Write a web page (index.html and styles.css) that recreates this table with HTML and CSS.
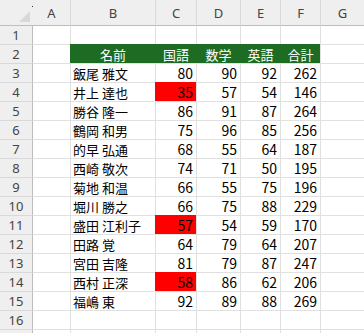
FILE: index.html
```html
<!DOCTYPE html>
<html lang="ja">
<head>
<meta charset="utf-8">
<link rel="stylesheet" href="styles.css">
</head>
<body>
<div class="sheet">
  <div class="corner"><span class="tri"></span></div>
  <div class="ch ch-a">A</div><div class="ch">B</div><div class="ch">C</div><div class="ch">D</div><div class="ch">E</div><div class="ch">F</div><div class="ch">G</div>

  <div class="rh r1">1</div><div class="cell a r1"></div><div class="cell r1"></div><div class="cell r1"></div><div class="cell r1"></div><div class="cell r1"></div><div class="cell r1"></div><div class="cell r1"></div>

  <div class="rh">2</div><div class="cell a"></div><div class="cell hd">名前</div><div class="cell hd">国語</div><div class="cell hd">数学</div><div class="cell hd">英語</div><div class="cell hd">合計</div><div class="cell"></div>

  <div class="rh">3</div><div class="cell a"></div><div class="cell name">飯尾 雅文</div><div class="cell num">80</div><div class="cell num">90</div><div class="cell num">92</div><div class="cell num">262</div><div class="cell"></div>
  <div class="rh">4</div><div class="cell a"></div><div class="cell name">井上 達也</div><div class="cell num bad">35</div><div class="cell num">57</div><div class="cell num">54</div><div class="cell num">146</div><div class="cell"></div>
  <div class="rh">5</div><div class="cell a"></div><div class="cell name">勝谷 隆一</div><div class="cell num">86</div><div class="cell num">91</div><div class="cell num">87</div><div class="cell num">264</div><div class="cell"></div>
  <div class="rh">6</div><div class="cell a"></div><div class="cell name">鶴岡 和男</div><div class="cell num">75</div><div class="cell num">96</div><div class="cell num">85</div><div class="cell num">256</div><div class="cell"></div>
  <div class="rh">7</div><div class="cell a"></div><div class="cell name">的早 弘通</div><div class="cell num">68</div><div class="cell num">55</div><div class="cell num">64</div><div class="cell num">187</div><div class="cell"></div>
  <div class="rh">8</div><div class="cell a"></div><div class="cell name">西崎 敬次</div><div class="cell num">74</div><div class="cell num">71</div><div class="cell num">50</div><div class="cell num">195</div><div class="cell"></div>
  <div class="rh">9</div><div class="cell a"></div><div class="cell name">菊地 和温</div><div class="cell num">66</div><div class="cell num">55</div><div class="cell num">75</div><div class="cell num">196</div><div class="cell"></div>
  <div class="rh">10</div><div class="cell a"></div><div class="cell name">堀川 勝之</div><div class="cell num">66</div><div class="cell num">75</div><div class="cell num">88</div><div class="cell num">229</div><div class="cell"></div>
  <div class="rh">11</div><div class="cell a"></div><div class="cell name">盛田 江利子</div><div class="cell num bad">57</div><div class="cell num">54</div><div class="cell num">59</div><div class="cell num">170</div><div class="cell"></div>
  <div class="rh">12</div><div class="cell a"></div><div class="cell name">田路 覚</div><div class="cell num">64</div><div class="cell num">79</div><div class="cell num">64</div><div class="cell num">207</div><div class="cell"></div>
  <div class="rh">13</div><div class="cell a"></div><div class="cell name">宮田 吉隆</div><div class="cell num">81</div><div class="cell num">79</div><div class="cell num">87</div><div class="cell num">247</div><div class="cell"></div>
  <div class="rh">14</div><div class="cell a"></div><div class="cell name">西村 正深</div><div class="cell num bad">58</div><div class="cell num">86</div><div class="cell num">62</div><div class="cell num">206</div><div class="cell"></div>
  <div class="rh">15</div><div class="cell a"></div><div class="cell name">福嶋 東</div><div class="cell num">92</div><div class="cell num">89</div><div class="cell num">88</div><div class="cell num">269</div><div class="cell"></div>
  <div class="rh">16</div><div class="cell a"></div><div class="cell"></div><div class="cell"></div><div class="cell"></div><div class="cell"></div><div class="cell"></div><div class="cell"></div>
  <div class="rh"></div><div class="cell a"></div><div class="cell"></div><div class="cell"></div><div class="cell"></div><div class="cell"></div><div class="cell"></div><div class="cell"></div>
</div>
</body>
</html>
```

FILE: styles.css
```css
html, body {
  margin: 0;
  padding: 0;
  background: #ffffff;
  overflow: hidden;
}

.sheet {
  display: grid;
  grid-template-columns: 32px 38px 85px 41px 44px 40px 40px 44px;
  grid-template-rows: 25px;
  grid-auto-rows: 19px;
  width: 364px;
  height: 333px;
  overflow: hidden;
  position: relative;
  font-family: "Noto Sans CJK JP", "Noto Sans", sans-serif;
  font-size: 13px;
  color: #000;
}

.sheet::before {
  content: "";
  position: absolute;
  left: 32px;
  top: 6px;
  width: 1px;
  height: 1px;
  background: #333;
}

.corner {
  background: #efefef;
  position: relative;
}

.tri {
  position: absolute;
  right: 2px;
  bottom: 3px;
  width: 0;
  height: 0;
  border-left: 11px solid transparent;
  border-bottom: 11px solid #d8d8d8;
}

.ch {
  background: #efefef;
  border-left: 1px solid #d9d9d9;
  display: flex;
  align-items: center;
  justify-content: center;
  font-family: "Noto Sans", "Open Sans", sans-serif;
  font-size: 13px;
  color: #444;
  padding-top: 1px;
  box-sizing: border-box;
}

.ch-a {
  border-left-color: #efefef;
}

.rh {
  background: #efefef;
  border-top: 1px solid #d9d9d9;
  display: flex;
  align-items: center;
  justify-content: center;
  font-family: "Noto Sans", "Open Sans", sans-serif;
  font-size: 13px;
  color: #444;
  box-sizing: border-box;
}

.rh.r1 {
  border-top-color: #bdbdbd;
}

.cell {
  border-left: 1px solid #e0e0e0;
  border-top: 1px solid #e0e0e0;
  box-sizing: border-box;
  display: flex;
  align-items: center;
  white-space: nowrap;
}

.cell.a {
  border-left-color: #bdbdbd;
}

.cell.r1 {
  border-top-color: #bdbdbd;
}

.name {
  padding-left: 2px;
}

.num {
  justify-content: flex-end;
  padding-right: 3px;
  font-size: 14px;
}

.hd {
  background: #1e6b24;
  border-color: transparent;
  color: #ffffff;
  justify-content: center;
}

.bad {
  background: #ff0000;
  border-color: transparent;
}
```
